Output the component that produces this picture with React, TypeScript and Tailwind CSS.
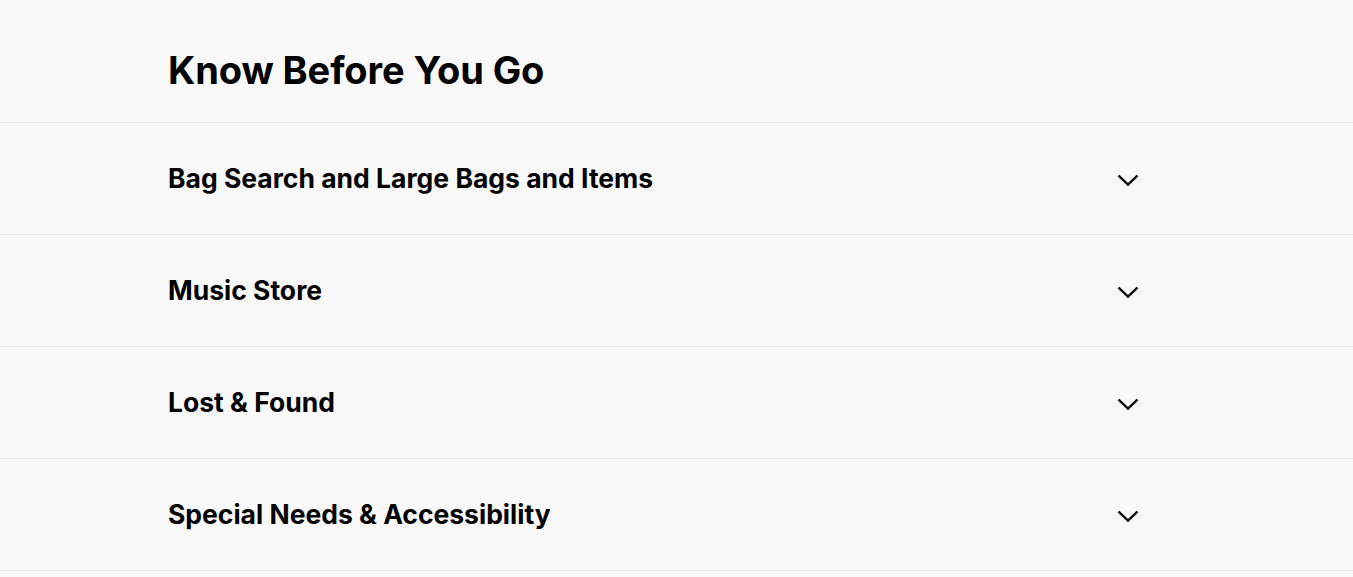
const ITEMS = [
  'Bag Search and Large Bags and Items',
  'Music Store',
  'Lost & Found',
  'Special Needs & Accessibility',
]

function Chevron() {
  return (
    <svg width="22" height="13" viewBox="0 0 22 13" fill="none" className="mt-[4px] -mr-[1px]">
      <polyline points="1.5,1.5 11,10.5 20.5,1.5" stroke="black" strokeWidth="2.4" />
    </svg>
  )
}

export default function App() {
  return (
    <div className="min-h-screen bg-[#f8f8f8] text-black" style={{ fontFamily: 'Inter, "Liberation Sans", sans-serif' }}>
      {/* Header */}
      <div className="h-[123px] flex items-center pl-[168px] border-b border-[#e6e6e6]">
        <h1 className="text-[38px] font-bold tracking-[-0.1px] leading-none mt-[18px]">Know Before You Go</h1>
      </div>

      {ITEMS.map((item) => (
        <div key={item} className="h-[112px] border-b border-[#e6e6e6]">
          <button className="w-[970px] h-full ml-[168px] flex items-center justify-between text-left">
            <span className="text-[26.5px] font-bold tracking-[0px] leading-none">{item}</span>
            <Chevron />
          </button>
        </div>
      ))}
    </div>
  )
}
